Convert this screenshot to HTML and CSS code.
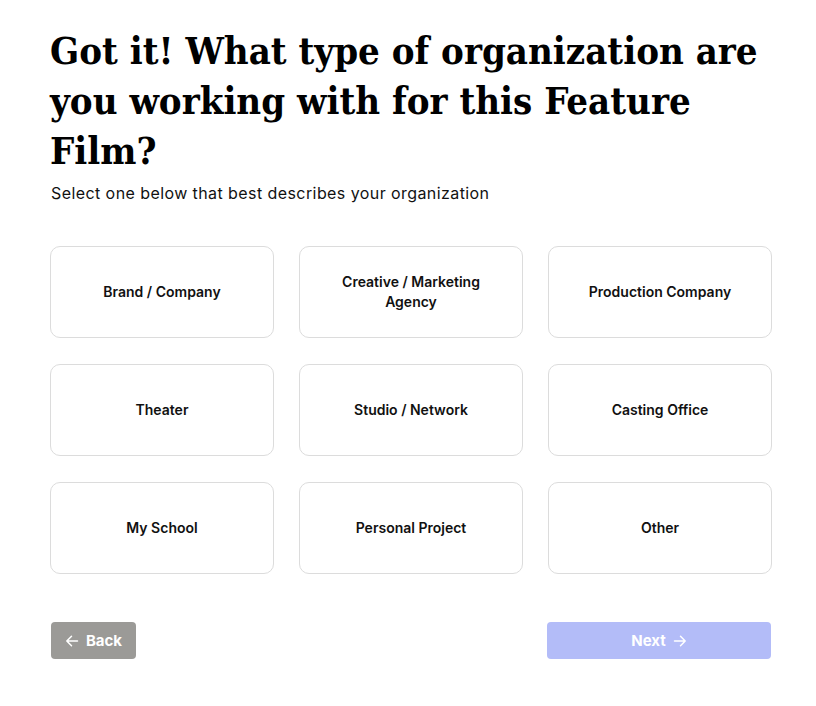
FILE: index.html
```html
<!DOCTYPE html>
<html>
<head>
<meta charset="utf-8">
<link rel="stylesheet" href="styles.css">
</head>
<body>
<main class="page">
  <h1 class="title">Got it! What type of organization are you working with for this Feature Film?</h1>
  <p class="subtitle">Select one below that best describes your organization</p>
  <div class="grid">
    <button class="card">Brand / Company</button>
    <button class="card">Creative / Marketing<br>Agency</button>
    <button class="card">Production Company</button>
    <button class="card">Theater</button>
    <button class="card">Studio / Network</button>
    <button class="card">Casting Office</button>
    <button class="card">My School</button>
    <button class="card">Personal Project</button>
    <button class="card">Other</button>
  </div>
  <div class="actions">
    <button class="btn btn-back">
      <svg class="arrow" width="14" height="14" viewBox="0 0 14 14"><path d="M12.5 7H1.8M6.5 2.2L1.8 7l4.7 4.8" fill="none" stroke="currentColor" stroke-width="1.5" stroke-linecap="round" stroke-linejoin="round"/></svg>
      Back
    </button>
    <button class="btn btn-next">
      Next
      <svg class="arrow" width="14" height="14" viewBox="0 0 14 14"><path d="M1.5 7h10.7M7.5 2.2L12.2 7l-4.7 4.8" fill="none" stroke="currentColor" stroke-width="1.5" stroke-linecap="round" stroke-linejoin="round"/></svg>
    </button>
  </div>
</main>
</body>
</html>
```
FILE: styles.css
```css
* { box-sizing: border-box; }
html, body { margin: 0; padding: 0; background: #fff; }
body { font-family: "Inter", "Liberation Sans", sans-serif; color: #111; }
.page {
  width: 772px;
  padding: 26px 0 0 50px;
}
.title {
  font-family: "DejaVu Serif Condensed", "DejaVu Serif", serif;
  font-stretch: semi-condensed;
  font-weight: bold;
  font-size: 38px;
  line-height: 50px;
  letter-spacing: 0;
  margin: 0;
  color: #000;
}
.subtitle {
  font-size: 16px;
  line-height: 22px;
  letter-spacing: 0.42px;
  margin: 6px 0 0 1px;
  color: #111;
}
.grid {
  margin-top: 42px;
  display: grid;
  grid-template-columns: repeat(3, 224px);
  column-gap: 25px;
  row-gap: 26px;
}
.card {
  height: 92px;
  background: #fff;
  border: 1px solid #dcdcdc;
  border-radius: 10px;
  font-family: "Inter", "Liberation Sans", sans-serif;
  font-weight: 600;
  font-size: 14px;
  line-height: 20px;
  color: #111;
  padding: 0 20px;
  text-align: center;
}
.actions {
  margin-top: 48px;
  display: flex;
  justify-content: space-between;
  padding: 0 1px;
}
.btn {
  height: 37px;
  border: none;
  border-radius: 4px;
  color: #fff;
  font-family: "Inter", "Liberation Sans", sans-serif;
  font-weight: 700;
  font-size: 15px;
  display: flex;
  align-items: center;
  justify-content: center;
  gap: 7px;
}
.btn-back {
  width: 85px;
  background: #9b9a97;
}
.btn-next {
  width: 224px;
  background: #b3bcf8;
}
.arrow { display: block; }
```
